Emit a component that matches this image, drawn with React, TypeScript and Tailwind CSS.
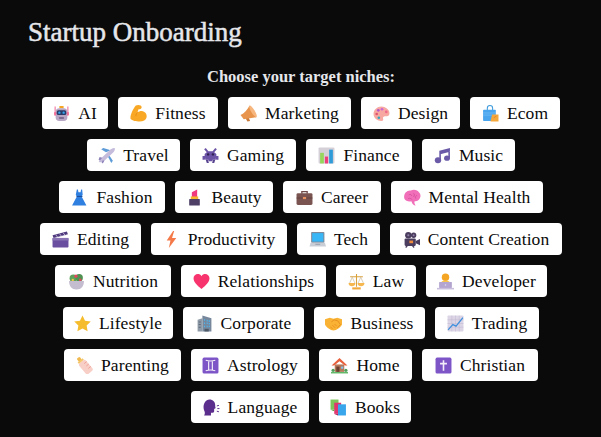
import React from 'react';

type Niche = { name: string; width: string; icon: React.ReactNode };

const Svg = ({ children }: { children: React.ReactNode }) => (
  <svg viewBox="0 0 32 32" className="w-[17px] h-[17px] shrink-0">
    {children}
  </svg>
);

const niches: Niche[][] = [
  [
    {
      name: 'AI',
      width: 'w-[66px]',
      icon: (
        <>
          <path d="M4 3v12M28 3v12" stroke="#f0709a" strokeWidth="2" />
          <rect x="12" y="2" width="8" height="4" rx="1" fill="#f5a524" />
          <rect x="5" y="6" width="22" height="24" rx="7" fill="#b7a6c4" />
          <rect x="2" y="13" width="4" height="7" rx="1.5" fill="#f0709a" />
          <rect x="26" y="13" width="4" height="7" rx="1.5" fill="#f0709a" />
          <rect x="7" y="10" width="18" height="9" rx="3" fill="#2b3a67" />
          <circle cx="12" cy="14.5" r="2.2" fill="#35a8f0" />
          <circle cx="20" cy="14.5" r="2.2" fill="#35a8f0" />
          <rect x="11" y="23" width="10" height="3" rx="1.5" fill="#6d5a80" />
        </>
      ),
    },
    {
      name: 'Fitness',
      width: 'w-[100px]',
      icon: (
        <>
          <path
            d="M11 1c4-2 11-1 11 3 0 3-4 4-6 4l-2 6c4-3 9-4 13-1 4 2 5 7 4 11-1 4-6 7-13 7-6 0-14-1-17-5C0 20 5 8 11 1z"
            fill="#f9a825"
          />
          <path d="M14 14c-2 2-3 4-3 7" fill="none" stroke="#e58a12" strokeWidth="1.6" />
        </>
      ),
    },
    {
      name: 'Marketing',
      width: 'w-[123px]',
      icon: (
        <>
          <path d="M10 24l6-1 3 7-5 1z" fill="#c77a3a" />
          <path d="M18 1L31 23 7 27 1 19C8 16 14 9 18 1z" fill="#e8944c" />
          <ellipse cx="24.5" cy="12" rx="3.5" ry="12.5" transform="rotate(-31 24.5 12)" fill="#f6b67e" />
        </>
      ),
    },
    {
      name: 'Design',
      width: 'w-[99px]',
      icon: (
        <>
          <path d="M16 3C8 3 1 9 1 17s7 13 15 13c3 0 4-2 3-4-1-3 1-5 4-5h3c3 0 5-2 5-6 0-6-8-12-15-12z" fill="#f7a8a0" />
          <circle cx="10" cy="10" r="2.5" fill="#b455c9" />
          <circle cx="17" cy="8" r="2.5" fill="#c867d6" />
          <circle cx="7" cy="17" r="2.5" fill="#e2536f" />
          <circle cx="11" cy="24" r="2.5" fill="#35a8c0" />
          <circle cx="25" cy="13" r="2.5" fill="#f06a8a" />
        </>
      ),
    },
    {
      name: 'Ecom',
      width: 'w-[90px]',
      icon: (
        <>
          <path d="M10 10V6a5 5 0 0 1 10 0v4" fill="none" stroke="#3f9bdc" strokeWidth="2" />
          <rect x="2" y="9" width="24" height="21" rx="1.5" fill="#4aa5ef" />
          <path d="M2 15h24M2 19h24" stroke="#86c8f8" strokeWidth="1" />
          <path d="M19 18h12v13H16z" fill="#f5a83c" />
          <path d="M22 24l5-3" stroke="#d9822b" strokeWidth="1.5" />
        </>
      ),
    },
  ],
  [
    {
      name: 'Travel',
      width: 'w-[93px]',
      icon: (
        <>
          <path d="M15 10L6 4l4-2 14 4zM22 17l6 9-3 4-8-15z" fill="#5e9cd8" />
          <path d="M2 28c-1-1 0-3 4-7L22 6c3-3 7-5 9-4s0 6-3 9L12 26c-4 4-9 3-10 2z" fill="#c5bcdc" />
          <path d="M3 19l5 1-4 5-3-1zM9 25l3 1-3 5-2-2z" fill="#8d82b8" />
        </>
      ),
    },
    {
      name: 'Gaming',
      width: 'w-[106px]',
      icon: (
        <>
          <path d="M7 2l5 6h8l5-6 3 2-5 6 4 3v4h4v7h-4l-2-4H7l-2 4H1v-7h4v-4l4-3-5-6z" fill="#6b53a6" />
          <path d="M6 19h20v5H20v3h-8v-3H6z" fill="#6b53a6" />
          <circle cx="11.5" cy="14" r="2.2" fill="#2f2150" />
          <circle cx="20.5" cy="14" r="2.2" fill="#2f2150" />
          <path d="M7 24h4l2 6H9zM25 24h-4l-2 6h4z" fill="#59448f" />
        </>
      ),
    },
    {
      name: 'Finance',
      width: 'w-[106px]',
      icon: (
        <>
          <rect x="1" y="1" width="30" height="30" rx="2" fill="#d5d0d8" />
          <rect x="4" y="11" width="7" height="20" fill="#96d65c" />
          <rect x="13" y="18" width="6" height="13" fill="#ec3f7c" />
          <rect x="21" y="5" width="7" height="26" fill="#2f9bd8" />
        </>
      ),
    },
    {
      name: 'Music',
      width: 'w-[93px]',
      icon: (
        <>
          <path d="M10 7l20-5v7l-20 5zM10 7h3v18h-3zM27 3h3v18h-3z" fill="#6a5aa8" />
          <ellipse cx="7.5" cy="25" rx="6" ry="5.5" fill="#6a5aa8" />
          <ellipse cx="24.5" cy="21" rx="5.5" ry="5" fill="#6a5aa8" />
        </>
      ),
    },
  ],
  [
    {
      name: 'Fashion',
      width: 'w-[106px]',
      icon: (
        <>
          <path d="M11 1h2l1 5h4l1-5h2l1 10-2 3 9 17H2l9-17-2-3z" fill="#2f7fe0" />
          <path d="M10.5 13h11v2h-11z" fill="#1c4f9c" />
        </>
      ),
    },
    {
      name: 'Beauty',
      width: 'w-[98px]',
      icon: (
        <>
          <path d="M11 15V6l10-5v14z" fill="#f0387f" />
          <rect x="9" y="14" width="14" height="5" fill="#f5b62e" />
          <rect x="6" y="19" width="20" height="12" rx="1" fill="#4d3f66" />
        </>
      ),
    },
    {
      name: 'Career',
      width: 'w-[98px]',
      icon: (
        <>
          <path d="M11 9V5h10v4" fill="none" stroke="#6e4a48" strokeWidth="2.5" />
          <rect x="1" y="8" width="30" height="22" rx="2.5" fill="#7a5450" />
          <path d="M1 17h30" stroke="#5f3f3e" strokeWidth="1.5" />
          <rect x="13" y="15" width="6" height="4" fill="#e7925e" />
        </>
      ),
    },
    {
      name: 'Mental Health',
      width: 'w-[152px]',
      icon: (
        <>
          <path d="M13 3c5-3 13-1 15 3 3 2 4 7 2 11-1 4-6 7-10 6-1 3 0 5 2 8-4 0-7-3-8-8-5 1-11 0-13-4-2-5 0-12 4-14 2-2 6-2 8-2z" fill="#f06fb8" />
          <path d="M9 11c3-2 5 0 6 2M18 8c2 2 2 4 0 7M24 12c-2 1-3 3-2 6M8 18c3-1 6 0 7 2" stroke="#d14c98" strokeWidth="1.4" fill="none" />
        </>
      ),
    },
  ],
  [
    {
      name: 'Editing',
      width: 'w-[101px]',
      icon: (
        <>
          <rect x="1" y="13" width="30" height="18" rx="1.5" fill="#6a4fa0" />
          <path d="M1 8l27-7 2 5L3 13z" fill="#4f3a7e" />
          <path d="M7 7l4 5M14 5l4 5M21 3.5l4 5" stroke="#cdc3de" strokeWidth="1.6" fill="none" />
          <path d="M1 13h30v5H1z" fill="#8872b4" />
        </>
      ),
    },
    {
      name: 'Productivity',
      width: 'w-[136px]',
      icon: <path d="M19 0L7 18h7l-3 14 14-19h-8l4-13z" fill="#f57a4a" />,
    },
    {
      name: 'Tech',
      width: 'w-[83px]',
      icon: (
        <>
          <rect x="4" y="2" width="25" height="20" rx="1.5" fill="#7e8a9a" />
          <rect x="6" y="4" width="21" height="16" fill="#38b6f5" />
          <path d="M3 22h27l2 7H1z" fill="#c9cdd6" />
          <rect x="12" y="24" width="9" height="2" fill="#9ba2ae" />
        </>
      ),
    },
    {
      name: 'Content Creation',
      width: 'w-[172px]',
      icon: (
        <>
          <circle cx="10" cy="8" r="6" fill="#4b3d5e" />
          <circle cx="20" cy="8" r="5" fill="#4b3d5e" />
          <rect x="3" y="14" width="21" height="14" rx="2" fill="#4b3d5e" />
          <path d="M24 19l8-4v12l-8-4z" fill="#4b3d5e" />
          <circle cx="10" cy="8" r="2" fill="#8d7fa5" />
          <circle cx="20" cy="8" r="1.8" fill="#8d7fa5" />
          <rect x="12" y="18" width="7" height="5" fill="#f08a3c" />
          <path d="M8 28l-3 3M18 28l3 3" stroke="#4b3d5e" strokeWidth="2.5" />
        </>
      ),
    },
  ],
  [
    {
      name: 'Nutrition',
      width: 'w-[116px]',
      icon: (
        <>
          <circle cx="10" cy="10" r="7" fill="#5fa05a" />
          <circle cx="21" cy="9" r="7" fill="#4e9150" />
          <circle cx="15" cy="6" r="3" fill="#e3455d" />
          <circle cx="23" cy="13" r="2.5" fill="#e3455d" />
          <circle cx="9" cy="13" r="2.2" fill="#f2c14e" />
          <path d="M2 15h28c0 10-5 16-14 16S2 25 2 15z" fill="#c4bccf" />
        </>
      ),
    },
    {
      name: 'Relationships',
      width: 'w-[145px]',
      icon: <path d="M16 30C7 23 1 17 1 10c0-5 4-8 8-8 3 0 5 1 7 4 2-3 4-4 7-4 4 0 8 3 8 8 0 7-6 13-15 20z" fill="#f8346e" />,
    },
    {
      name: 'Law',
      width: 'w-[80px]',
      icon: (
        <>
          <path d="M15 2h2v24h-2zM4 6h24v2H4z" fill="#d8a13c" />
          <path d="M8 8L3 19M8 8l5 11M24 8l-5 11M24 8l5 11" stroke="#b8a57e" strokeWidth="1" />
          <path d="M1 19h13c0 4-3 6-6.5 6S1 23 1 19zM18 19h13c0 4-3 6-6.5 6S18 23 18 19z" fill="#f5b74e" />
          <path d="M8 27h16v4H8z" fill="#f2a93c" />
        </>
      ),
    },
    {
      name: 'Developer',
      width: 'w-[121px]',
      icon: (
        <>
          <circle cx="16" cy="8" r="7" fill="#f5a524" />
          <path d="M7 20c0-4 4-6 9-6s9 2 9 6v3H7z" fill="#f6c54e" />
          <rect x="4" y="17" width="24" height="11" rx="1" fill="#b3a5cf" />
          <path d="M0 28h32v3H0z" fill="#c9bfdd" />
          <circle cx="16" cy="22.5" r="1.5" fill="#e5def0" />
        </>
      ),
    },
  ],
  [
    {
      name: 'Lifestyle',
      width: 'w-[110px]',
      icon: <path d="M16 1l4.8 9.8 10.7 1.6-7.700 7.500 1.800 10.600L16 25.400l-9.600 5.100 1.800-10.600L.5 12.400l10.700-1.600z" fill="#f5bd2e" />,
    },
    {
      name: 'Corporate',
      width: 'w-[121px]',
      icon: (
        <>
          <path d="M3 9l9-3v25H3z" fill="#8f9aa8" />
          <path d="M12 1l17 5v25H12z" fill="#77889c" />
          <path d="M15 8h2v3h-2zM20 9h2v3h-2zM24 10h2v3h-2zM15 14h2v3h-2zM20 14h2v3h-2zM24 15h2v3h-2zM15 20h2v3h-2zM20 20h2v3h-2zM24 20h2v3h-2z" fill="#4db4f0" />
          <path d="M5 12h4v2H5zM5 17h4v2H5zM5 22h4v2H5z" fill="#5f6b7a" />
          <rect x="16" y="26" width="8" height="5" fill="#4f5a68" />
        </>
      ),
    },
    {
      name: 'Business',
      width: 'w-[111px]',
      icon: (
        <>
          <path d="M0 8l9-3 7 2 7-2 9 3v10c-3 6-10 11-16 11S3 24 0 18z" fill="#f9b233" />
          <path d="M12 13l5-4 7 2 5 7-6 6" fill="none" stroke="#e58c1f" strokeWidth="1.6" />
          <path d="M10 22l4 4M14 19l5 5M18 17l4 4" stroke="#e58c1f" strokeWidth="1.6" />
        </>
      ),
    },
    {
      name: 'Trading',
      width: 'w-[104px]',
      icon: (
        <>
          <rect x="1" y="1" width="30" height="30" rx="1.5" fill="#dcd5e6" />
          <path d="M1 9h30M1 16h30M1 23h30M9 1v30M16 1v30M23 1v30" stroke="#c2b9d1" strokeWidth="1" />
          <path d="M2 28l9-10 6 3 13-16" fill="none" stroke="#3f8fdc" strokeWidth="2.4" />
        </>
      ),
    },
  ],
  [
    {
      name: 'Parenting',
      width: 'w-[117px]',
      icon: (
        <g transform="rotate(-40 16 16)">
          <rect x="12.5" y="-3" width="7" height="7" rx="2.5" fill="#f0b94e" />
          <rect x="10" y="3" width="12" height="4" fill="#f3c66a" />
          <rect x="8" y="7" width="16" height="26" rx="4" fill="#f8cfc6" />
          <path d="M18 13h6M18 19h6M18 25h6" stroke="#ee9a90" strokeWidth="1.5" />
        </g>
      ),
    },
    {
      name: 'Astrology',
      width: 'w-[118px]',
      icon: (
        <>
          <rect x="1" y="1" width="30" height="30" rx="3" fill="#7d55c7" />
          <path d="M7 6c6 2 12 2 18 0M7 26c6-2 12-2 18 0M12.5 8v16M19.5 8v16" fill="none" stroke="#f2edf9" strokeWidth="2.2" />
        </>
      ),
    },
    {
      name: 'Home',
      width: 'w-[93px]',
      icon: (
        <>
          <path d="M0 28h32v3H0z" fill="#63b96a" />
          <rect x="7" y="14" width="18" height="14" fill="#b6795a" />
          <path d="M16 2L1 16h5l10-8 10 8h5z" fill="#e9623e" />
          <rect x="10" y="18" width="6" height="10" fill="#6b4030" />
          <rect x="19" y="18" width="4" height="4" fill="#7fc4ee" />
          <circle cx="4" cy="25" r="3" fill="#4f9e5a" />
          <circle cx="28" cy="25" r="3" fill="#4f9e5a" />
        </>
      ),
    },
    {
      name: 'Christian',
      width: 'w-[116px]',
      icon: (
        <>
          <rect x="1" y="1" width="30" height="30" rx="3" fill="#7d55c7" />
          <path d="M14.5 6h3v5h5v3h-5v12h-3V14h-5v-3h5z" fill="#f2edf9" />
        </>
      ),
    },
  ],
  [
    {
      name: 'Language',
      width: 'w-[118px]',
      icon: (
        <>
          <path d="M12 1c7 0 11 5 11 11 0 2 0 3 1 5l-3 2v4c0 2-2 3-4 3h-2v5H2c2-3 2-6 0-10C-1 14 3 1 12 1z" fill="#5b2d8c" />
          <path d="M26 13l4-1M27 18h4M26 23l4 1" stroke="#5b2d8c" strokeWidth="1.8" />
        </>
      ),
    },
    {
      name: 'Books',
      width: 'w-[92px]',
      icon: (
        <>
          <rect x="1" y="1" width="15" height="19" fill="#7cc65a" />
          <rect x="8" y="7" width="13" height="21" fill="#e0356e" />
          <rect x="15" y="10" width="15" height="21" fill="#39a5ea" />
          <path d="M1 20l7 3v-3z" fill="#5a9c3e" />
          <path d="M8 28l7 3v-3z" fill="#a02a60" />
        </>
      ),
    },
  ],
];

const App = () => {
  return (
    <div className="min-h-screen bg-[#0a0a0a] pl-7 pr-[27px] pt-4 font-['Liberation_Serif',serif]">
      <h1 className="text-[27px] leading-[32px] font-medium text-[#e5e7eb] [-webkit-text-stroke:0.5px_#e5e7eb]">
        Startup Onboarding
      </h1>
      <p className="mt-[19px] mb-[10px] text-center text-[16.5px] leading-[20px] font-bold text-[#e5e7eb]">
        Choose your target niches:
      </p>
      <div className="flex flex-wrap justify-center gap-[10px] px-2">
        {niches.flat().map((item) => (
          <button
            key={item.name}
            className={`${item.width} h-8 flex items-center justify-center gap-2 rounded-[4px] bg-white text-[17.5px] tracking-[0.1px] text-[#0a0a0a]`}
          >
            <Svg>{item.icon}</Svg>
            <span className="pt-px">{item.name}</span>
          </button>
        ))}
      </div>
    </div>
  );
};

export default App;
